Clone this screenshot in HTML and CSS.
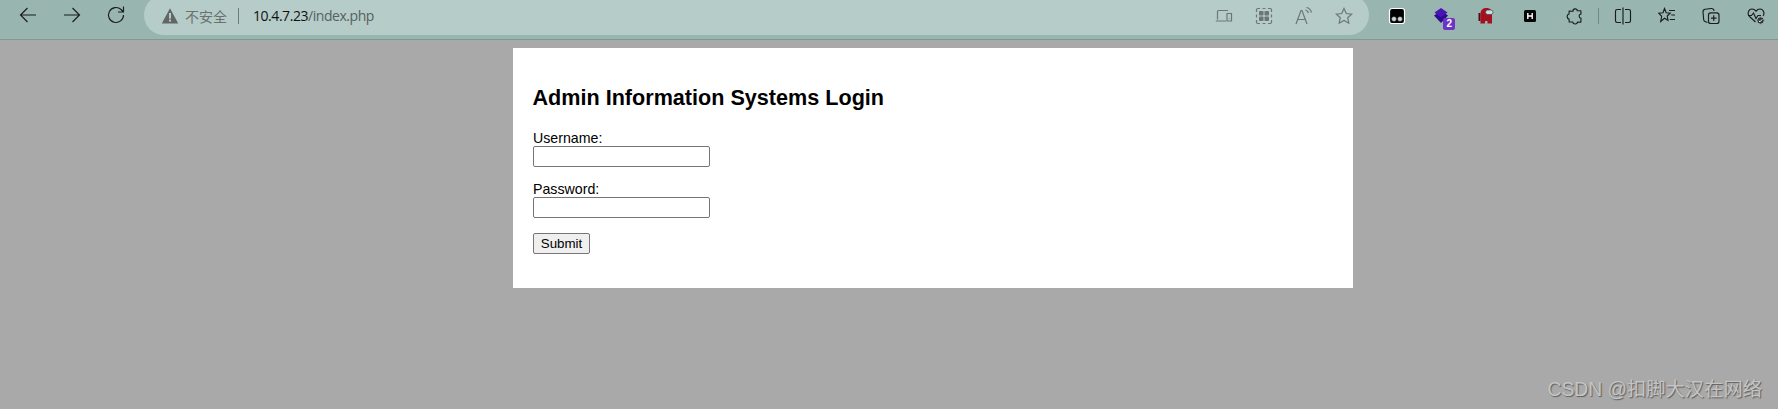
FILE: index.html
```html
<!DOCTYPE html>
<html lang="zh">
<head>
<meta charset="utf-8">
<title>Admin Information Systems Login</title>
<link rel="stylesheet" href="styles.css">
</head>
<body>
<header class="toolbar">
  <div class="nav">
    <svg class="ic" viewBox="0 0 20 20"><path d="M18 10H2.500M9.500 3l-7 7 7 7"/></svg>
    <svg class="ic" viewBox="0 0 20 20"><path d="M2 10h15.500M10.500 3l7 7-7 7"/></svg>
    <svg class="ic" viewBox="0 0 20 20"><path d="M17.500 10a7.500 7.500 0 1 1-2.400-5.500L17.500 7M17.500 1.500V7H12"/></svg>
  </div>
  <div class="omnibox">
    <svg class="warn" viewBox="0 0 18 18"><path d="M9 1.200 17.200 16.500H.8Z"/><rect class="warn-mark" x="8" y="6" width="2" height="5.600"/><rect class="warn-mark" x="8" y="12.600" width="2" height="2"/></svg>
    <span class="insecure">不安全</span>
    <span class="sep"></span>
    <span class="url"><b>10.4.7.23</b>/index.php</span>
    <div class="omni-icons">
      <svg class="gi" viewBox="0 0 18 18"><path d="M2.500 12.500V4.500a1 1 0 0 1 1-1H13M.8 14H11M12 6.500h4.500v7.500H12zM14.200 11.500v.5"/></svg>
      <svg class="gi" viewBox="0 0 18 18"><path d="M1.500 5V3a1.500 1.500 0 0 1 1.500-1.500H5M7.500 1.500h3M13 1.500h2A1.500 1.500 0 0 1 16.500 3v2M16.500 7.500v3M16.500 13v2a1.500 1.500 0 0 1-1.500 1.500h-2M10.500 16.500h-3M5 16.500H3A1.500 1.500 0 0 1 1.500 15v-2M1.500 10.500v-3"/><rect class="gi-fill" x="4" y="4" width="4.500" height="4.500" rx=".8"/><rect class="gi-fill" x="9.500" y="4" width="4.500" height="4.500" rx=".8"/><rect class="gi-fill" x="4" y="9.500" width="4.500" height="4.500" rx=".8"/><rect class="gi-fill" x="9.500" y="9.500" width="4.500" height="4.500" rx=".8"/></svg>
      <svg class="gi" viewBox="0 0 18 18"><path d="M1 17 6 3.500h1L12 17M2.800 12.500h7.400M10.500 3c1.500.4 2.600 1.500 3 3M11.500.5c2.600.6 4.400 2.600 5 5"/></svg>
      <svg class="gi" viewBox="0 0 18 18"><path d="M9 1.500l2.300 5 5.400.6-4 3.700 1.100 5.400L9 13.500l-4.800 2.700 1.100-5.400-4-3.700 5.400-.6z"/></svg>
    </div>
  </div>
  <div class="tools">
    <svg class="tool" viewBox="0 0 18 18"><rect x="1.500" y="1.500" width="15" height="15" rx="2.500" fill="#000" stroke="#fff" stroke-width="1.200"/><circle cx="6" cy="12" r="2.300" fill="#c9d8d4" stroke="#666" stroke-width=".5"/><circle cx="12" cy="12" r="2.300" fill="#c9d8d4" stroke="#666" stroke-width=".5"/></svg>
    <span class="badge-wrap">
      <svg class="tool" viewBox="0 0 18 18"><path d="M9 4 16 8.500 9 16 2 8.500Z" fill="#2d0b8f"/><path d="M9 1 15.500 5.500 9 10.500 2.500 5.500Z" fill="#4a14b4"/></svg>
      <span class="badge">2</span>
    </span>
    <svg class="tool" viewBox="0 0 18 18"><path d="M1.500 6h2v8h-2z" fill="#4d0a14"/><path d="M3.500 7C3.500 2.800 6 1 9.500 1S15 3 15 7v9.500h-4.500V14H8v2.500H3.500Z" fill="#a5101f"/><rect x="8.500" y="3" width="7.500" height="4.500" rx="2.200" fill="#c9dde4" stroke="#333" stroke-width=".6"/></svg>
    <svg class="tool" viewBox="0 0 18 18"><rect x="3" y="3" width="12" height="12" rx="1.500" fill="#050505"/><path d="M6.800 6v6M11.200 6v6M6.800 9h4.400" stroke="#fff" stroke-width="1.400" fill="none"/></svg>
    <svg class="ic small" viewBox="0 0 18 18"><path d="M7 4.200C6.800 1.500 11 .9 11.300 3.700L14.800 3.800 15 7C12.500 7.200 12.500 11 15 11.300L14.800 15.200 11.500 15C11.500 17.500 7 17.700 6.800 15L3.200 15 3 12C.5 11.500 .5 7.500 3 7L3.200 4z"/></svg>
    <span class="tool-sep"></span>
    <svg class="ic small" viewBox="0 0 18 18"><path d="M7 2.500H3.200A1.700 1.700 0 0 0 1.500 4.200v9.600a1.700 1.700 0 0 0 1.700 1.700H7M11 2.500h3.800a1.700 1.700 0 0 1 1.700 1.700v9.600a1.700 1.700 0 0 1-1.700 1.700H11M9 .5v17"/></svg>
    <svg class="ic small" viewBox="0 0 18 18"><path d="M6.500 1.500l1.700 4.200 4 .4-3 2.900.8 4.300-3.500-2-3.800 3.200 1-5.200L.8 6.300l4.200-.5zM11 3.500h6M13.200 8H17M11.800 12.500H17"/></svg>
    <svg class="ic small" viewBox="0 0 18 18"><path d="M5.500 15.500 3 14.500c-.8-.3-1.200-1-1.300-1.800L1 5c-.1-1.400.7-2.500 2.200-2.700L9 1.500c1.700-.2 2.800.6 3.200 2.500"/><rect x="6.500" y="5.800" width="10.500" height="10.700" rx="2.300"/><path d="M11.750 8.300v5.700M9 11.150h5.500"/></svg>
    <svg class="ic small" viewBox="0 0 18 18"><path d="M8.500 15 2.500 9.500C-.2 7 1.500 2 5 2c1.700 0 3 .8 4 2.200C10 2.800 11.300 2 13 2c3.500 0 5 4.500 3 7M1 8.500h3.500L6.500 6l2.500 5.500 2-3h3"/><circle class="health" cx="13.500" cy="13.500" r="3.700"/><path class="check" d="M11.800 13.700l1.200 1.100 2.200-2.400"/></svg>
  </div>
</header>
<main class="page">
  <section class="card">
    <h2 class="title">Admin Information Systems Login</h2>
    <form class="login">
      <label class="field"><span class="label">Username:</span><input class="input" type="text"></label>
      <label class="field"><span class="label">Password:</span><input class="input" type="password"></label>
      <button class="submit" type="button">Submit</button>
    </form>
  </section>
</main>
<div class="watermark">CSDN @扣脚大汉在网络</div>
</body>
</html>
```
FILE: styles.css
```css
* { box-sizing: border-box; }
html, body { margin: 0; height: 100%; overflow: hidden; }
body {
  background: #a9a9a9;
  font-family: "Liberation Sans", Arial, "Noto Sans CJK SC", sans-serif;
  color: #000;
  display: flex;
  flex-direction: column;
}
.toolbar {
  height: 40px;
  flex: none;
  background: #98b5af;
  border-bottom: 1px solid #7c9b94;
  display: flex;
  align-items: flex-start;
  overflow: hidden;
}
.nav {
  width: 144px;
  flex: none;
  display: flex;
  gap: 24px;
  padding: 5px 0 0 18px;
}
.ic {
  width: 20px;
  height: 20px;
  flex: none;
  fill: none;
  stroke: #1c1c1c;
  stroke-width: 1.15;
}
.ic.small { width: 18px; height: 18px; }
.check { stroke: #fff; stroke-width: 1; }
.omnibox {
  width: 1225px;
  height: 40px;
  margin-top: -5px;
  flex: none;
  background: #b5ccc8;
  border-radius: 20px;
  display: flex;
  align-items: center;
  padding: 0 0 0 17px;
  font-size: 14px;
}
.warn { width: 18px; height: 18px; flex: none; fill: #5f6664; margin-top: 1px; }
.warn-mark { fill: #b5ccc8; }
.insecure { margin-left: 6px; color: #6a716f; font-size: 14px; line-height: 20px; font-family: "Noto Sans CJK SC", sans-serif; margin-top: 1px; }
.sep { width: 1px; height: 16px; background: #6e7a77; margin: 2px 14px 0 11px; }
.url { color: #56615f; font-size: 14px; line-height: 20px; margin-top: 1px; font-family: "Open Sans", "Liberation Sans", sans-serif; letter-spacing: -.45px; }
.url b { font-weight: 400; color: #111; }
.omni-icons {
  margin-left: auto;
  margin-right: 16px;
  margin-top: 2px;
  display: flex;
  gap: 22px;
  align-items: center;
}
.gi { width: 18px; height: 18px; fill: none; stroke: #6d7674; stroke-width: 1.2; }
.gi-fill { fill: #6d7674; stroke: none; }
.tools {
  flex: 1;
  display: flex;
  align-items: center;
  height: 32px;
  padding-left: 19px;
  gap: 26.4px;
}
.tool { width: 18px; height: 18px; flex: none; display: block; }
.badge-wrap { position: relative; display: block; width: 18px; height: 18px; flex: none; }
.badge {
  position: absolute;
  left: 11px;
  top: 11px;
  width: 12px;
  height: 12px;
  border-radius: 2px;
  background: #6d33c4;
  color: #fff;
  font-size: 10px;
  font-weight: 700;
  line-height: 12px;
  text-align: center;
}
.tool-sep { width: 1px; height: 16px; flex: none; background: #6f8a84; margin: 0 -11.9px; }
.health { fill: #333; stroke: #98b5af; stroke-width: 1; }
.page {
  flex: 1;
  padding: 8px 0 0 513px;
}
.card {
  width: 840px;
  height: 240px;
  background: #fff;
  padding: 20px;
}
.title {
  margin: 18px 0 20px -0.5px;
  font-size: 21.6px;
  line-height: 24px;
  font-weight: 700;
}
.login { font-size: 14.2px; line-height: 16px; }
.field { display: block; margin-bottom: 14px; }
.label { display: block; height: 16px; }
.input {
  display: block;
  width: 177px;
  height: 21px;
  border: 1px solid #767676;
  border-radius: 2px;
  background: #fff;
  padding: 1px 2px;
  margin: 0;
}
.submit {
  display: block;
  width: 57px;
  height: 21px;
  padding: 0;
  font: 13.333px "Liberation Sans", Arial, sans-serif;
  color: #000;
  background: #efefef;
  border: 1px solid #767676;
  border-radius: 2px;
  margin-top: 15px;
}
.watermark {
  position: absolute;
  right: 16px;
  bottom: 7px;
  font-size: 19.3px;
  line-height: 24px;
  color: #c4c4c4;
  text-shadow: 1px 1px 1px #5e5e5e;
  font-family: "Liberation Sans", "Noto Sans CJK SC", sans-serif;
}
```
